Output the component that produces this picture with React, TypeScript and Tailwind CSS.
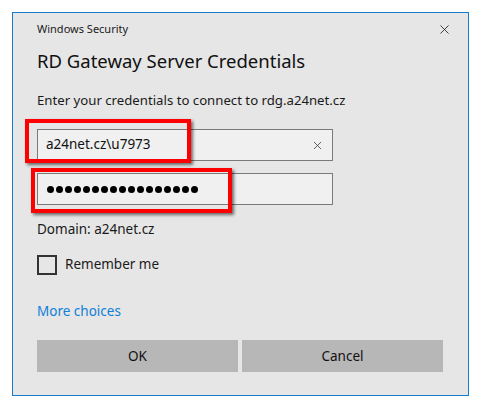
import { X } from 'lucide-react'

const font = { fontFamily: '"Segoe UI", "Noto Sans", "Open Sans", sans-serif' }

function Dots({ count }: { count: number }) {
  return (
    <div className="flex items-center gap-[2px]">
      {Array.from({ length: count }).map((_, i) => (
        <span key={i} className="size-[7px] rounded-full bg-black" />
      ))}
    </div>
  )
}

export default function App() {
  return (
    <div className="relative h-[409px] w-[481px] bg-white pl-3 pt-3" style={font}>
      <div className="flex h-[384px] w-[457px] flex-col border border-[#1979ca] bg-[#e6e6e6] pl-6 pr-6 text-black">
        <div className="flex h-[24px] items-end justify-between pb-[3px]">
          <span className="text-[11px] leading-none text-[#1a1a1a]">Windows Security</span>
          <X className="-mr-[8px] mb-[-3px] size-[15px] text-[#1a1a1a]" strokeWidth={1.3} />
        </div>
        <h1 className="mt-[11px] text-[18.5px] leading-[26px] text-[#111]">RD Gateway Server Credentials</h1>

        <p className="mt-[16px] text-[13.2px] leading-[20px] text-[#1a1a1a]">
          Enter your credentials to connect to rdg.a24net.cz
        </p>

        <div className="mt-[19px] flex h-[32px] w-[296px] items-center justify-between border border-[#7a7a7a] bg-[#f0f0f0] pl-[8px] pr-[8px]">
          <span className="text-[13.5px] leading-none text-[#111]">a24net.cz\u7973</span>
          <X className="size-[13px] text-[#333]" strokeWidth={1.4} />
        </div>

        <div className="mt-[12px] flex h-[32px] w-[296px] items-center border border-[#7a7a7a] bg-[#f0f0f0] pl-[9px]">
          <Dots count={17} />
        </div>

        <p className="mt-[14px] text-[13.5px] leading-[20px] text-[#1a1a1a]">Domain: a24net.cz</p>

        <label className="mt-[16px] flex items-center gap-[8px]">
          <span className="size-[20px] border-2 border-[#333]" />
          <span className="text-[13.5px] leading-none text-[#1a1a1a]">Remember me</span>
        </label>

        <a className="mt-[26px] text-[13.5px] leading-[20px] text-[#0f7fd9]">More choices</a>

        <div className="mt-[19px] flex gap-[4px]">
          <button className="h-[32px] w-[201px] bg-[#b7b7b7] text-[13.5px] text-[#111]">OK</button>
          <button className="h-[32px] w-[201px] bg-[#b7b7b7] text-[13.5px] text-[#111]">Cancel</button>
        </div>
      </div>

      <div className="pointer-events-none absolute left-[25px] top-[119px] h-[44px] w-[166px] border-[4px] border-[#ff0000] shadow-[2px_2px_3px_rgba(0,0,0,0.55)]" />
      <div className="pointer-events-none absolute left-[31px] top-[168px] h-[45px] w-[201px] border-[4px] border-[#ff0000] shadow-[2px_2px_3px_rgba(0,0,0,0.55)]" />
    </div>
  )
}
